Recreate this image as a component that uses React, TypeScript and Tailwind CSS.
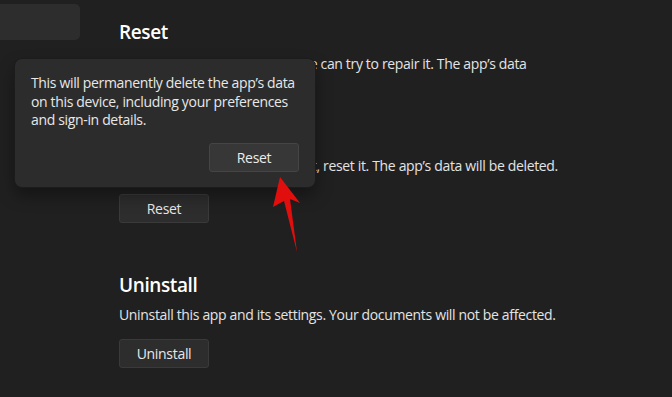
const font = "font-['Segoe_UI','Open_Sans','Liberation_Sans',sans-serif]";

const Button = ({ label, className = "" }: { label: string; className?: string }) => (
  <button
    className={`h-[29px] w-[90px] rounded-[3px] border border-[#3a3a3a] bg-[#2d2d2d] text-[14px] tracking-[-0.3px] text-[#e8e8e8] ${className}`}
  >
    {label}
  </button>
);

const App = () => {
  return (
    <div className={`relative h-[397px] w-[672px] overflow-hidden bg-[#202020] ${font}`}>
      <div className="flex">
        {/* sidebar, mostly cropped out */}
        <div className="w-[80px] shrink-0 pt-1">
          <div className="h-[36px] rounded-r-[5px] bg-[#2d2d2d]" />
        </div>

        <main className="ml-[39px] flex flex-col items-start pt-[18px] text-[14px] tracking-[-0.34px] text-[#e4e4e4]">
          <h2 className="text-[19px] font-semibold leading-[28px] tracking-[-0.4px] text-white">Reset</h2>
          <p className="mt-[8px] w-[440px] leading-[20px]">
            If this app isn’t working right, we can try to repair it. The app’s data won’t be affected.
          </p>
          <Button label="Repair" className="mt-[14px]" />
          <p className="mt-[19px] leading-[20px]">
            If this app still isn’t working right, reset it. The app’s data will be deleted.
          </p>
          <Button label="Reset" className="mt-[18px]" />

          <h2 className="mt-[48px] text-[19px] font-semibold leading-[28px] tracking-[-0.4px] text-white">
            Uninstall
          </h2>
          <p className="mt-[6px] leading-[20px]">
            Uninstall this app and its settings. Your documents will not be affected.
          </p>
          <Button label="Uninstall" className="mt-[14px]" />
        </main>
      </div>

      {/* confirmation flyout */}
      <div className="absolute left-[14px] top-[58px] flex h-[130px] w-[302px] flex-col rounded-[8px] border border-[#1c1c1c] bg-[#2c2c2c] px-[16px] pt-[15px] shadow-[0_8px_16px_rgba(0,0,0,0.35)]">
        <p className="text-[14px] leading-[18.5px] tracking-[-0.34px] text-[#e8e8e8]">
          This will permanently delete the app’s data on this device, including your preferences and sign-in details.
        </p>
        <div className="mt-[13px] flex justify-end">
          <button className="h-[29px] w-[90px] rounded-[3px] border border-[#454545] bg-[#373737] text-[14px] tracking-[-0.3px] text-[#ececec]">
            Reset
          </button>
        </div>
      </div>

      {/* annotation arrow */}
      <svg className="absolute left-[260px] top-[170px]" width="45" height="90" viewBox="0 0 45 90">
        <polygon points="20,7 40,33 30,29 37,82 24,31 13,37" fill="#e10e0e" />
      </svg>
    </div>
  );
};

export default App;
